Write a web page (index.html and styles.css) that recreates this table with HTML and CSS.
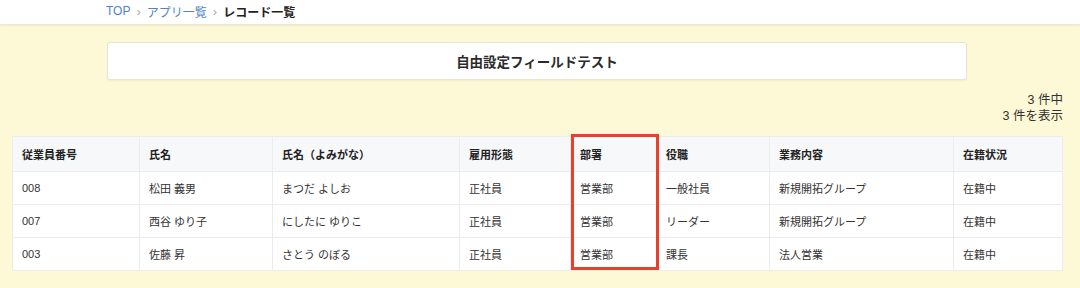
FILE: index.html
```html
<!DOCTYPE html>
<html lang="ja">

<head>
    <meta charset="UTF-8">
    <meta name="viewport" content="width=device-width, initial-scale=1.0">
    <title>レコード一覧</title>
    <link rel="stylesheet" href="styles.css">
</head>

<body>
    <header class="topbar">
        <nav class="crumbs">
            <a href="#" class="crumb-link">TOP</a>
            <span class="crumb-sep">&rsaquo;</span>
            <a href="#" class="crumb-link">アプリ一覧</a>
            <span class="crumb-sep">&rsaquo;</span>
            <span class="crumb-current">レコード一覧</span>
        </nav>
    </header>

    <main class="content">
        <div class="app-title">自由設定フィールドテスト</div>

        <div class="record-count">
            <div>3 件中</div>
            <div>3 件を表示</div>
        </div>

        <div class="table-wrap">
            <table class="records">
                <colgroup>
                    <col style="width: 127px">
                    <col style="width: 133px">
                    <col style="width: 187px">
                    <col style="width: 111px">
                    <col style="width: 86px">
                    <col style="width: 113px">
                    <col style="width: 184px">
                    <col>
                </colgroup>
                <thead>
                    <tr>
                        <th>従業員番号</th>
                        <th>氏名</th>
                        <th>氏名（よみがな）</th>
                        <th>雇用形態</th>
                        <th>部署</th>
                        <th>役職</th>
                        <th>業務内容</th>
                        <th>在籍状況</th>
                    </tr>
                </thead>
                <tbody>
                    <tr>
                        <td>008</td>
                        <td>松田 義男</td>
                        <td>まつだ よしお</td>
                        <td>正社員</td>
                        <td>営業部</td>
                        <td>一般社員</td>
                        <td>新規開拓グループ</td>
                        <td>在籍中</td>
                    </tr>
                    <tr>
                        <td>007</td>
                        <td>西谷 ゆり子</td>
                        <td>にしたに ゆりこ</td>
                        <td>正社員</td>
                        <td>営業部</td>
                        <td>リーダー</td>
                        <td>新規開拓グループ</td>
                        <td>在籍中</td>
                    </tr>
                    <tr>
                        <td>003</td>
                        <td>佐藤 昇</td>
                        <td>さとう のぼる</td>
                        <td>正社員</td>
                        <td>営業部</td>
                        <td>課長</td>
                        <td>法人営業</td>
                        <td>在籍中</td>
                    </tr>
                </tbody>
            </table>
            <!-- highlight around the 部署 column -->
            <div class="col-highlight"></div>
        </div>
    </main>
</body>

</html>
```

FILE: styles.css
```css
body {
    margin: 0;
    height: 288px;
    overflow: hidden;
    background: #fdf8d5;
    font-family: "Liberation Sans", "Noto Sans CJK JP", sans-serif;
    color: #333;
}

/* Header / breadcrumbs */
.topbar {
    background: #fff;
    height: 24px;
    border-bottom: 1px solid #ece8d4;
    box-shadow: 0 1px 2px rgba(0, 0, 0, 0.06);
}

.crumbs {
    display: flex;
    align-items: center;
    gap: 6px;
    height: 22px;
    padding-left: 106px;
    font-size: 12px;
}

.crumb-link {
    color: #4f83cc;
    text-decoration: none;
}

.crumb-sep {
    color: #aaa;
    font-size: 13px;
}

.crumb-current {
    color: #222;
    font-weight: bold;
}

/* Main area */
.content {
    padding: 17px 17px 0 12px;
}

.app-title {
    margin: 0 96px 0 95px;
    height: 38px;
    display: flex;
    align-items: center;
    justify-content: center;
    background: #fff;
    border: 1px solid #e8e5d8;
    border-radius: 3px;
    box-shadow: 0 1px 2px rgba(0, 0, 0, 0.05);
    font-size: 13.5px;
    font-weight: bold;
    color: #2b2b2b;
    box-sizing: border-box;
}

.record-count {
    margin-top: 12px;
    text-align: right;
    font-size: 12.5px;
    line-height: 16px;
    color: #333;
}

.table-wrap {
    position: relative;
    margin-top: 12px;
    width: 1051px;
}

.records {
    width: 100%;
    border-collapse: collapse;
    table-layout: fixed;
    background: #fff;
    font-size: 11px;
    color: #333;
    border: 1px solid #e6e6e8;
}

.records th,
.records td {
    text-align: left;
    padding: 0 9px;
    border: 1px solid #ececee;
    white-space: nowrap;
}

.records th {
    height: 34px;
    background: #f7f8fa;
    font-weight: bold;
    color: #222;
}

.records td {
    height: 32px;
}

.col-highlight {
    position: absolute;
    left: 559px;
    top: -2px;
    width: 82px;
    height: 130px;
    border: 3px solid #e8402a;
    pointer-events: none;
}
```
